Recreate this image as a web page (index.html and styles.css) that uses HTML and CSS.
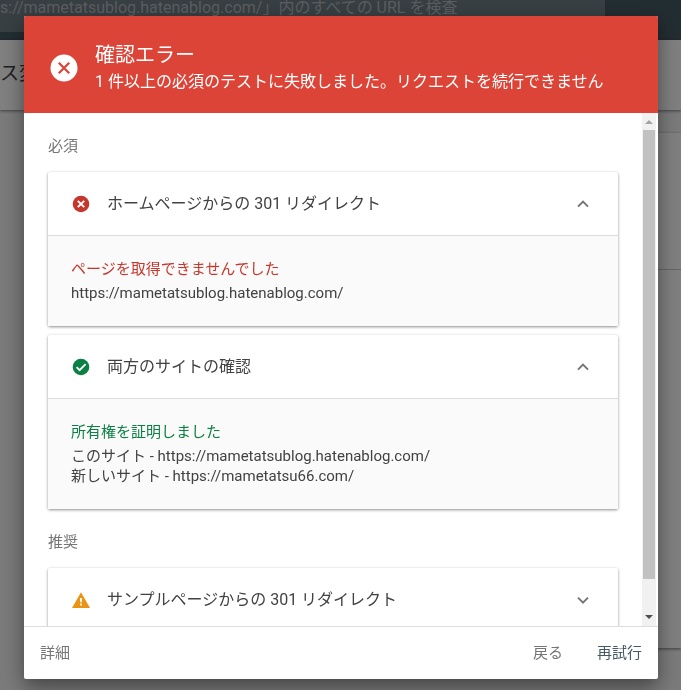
FILE: index.html
```html
<!DOCTYPE html>
<html lang="ja">
<head>
    <meta charset="UTF-8">
    <meta name="viewport" content="width=device-width, initial-scale=1.0">
    <title>確認エラー</title>
    <link rel="stylesheet" href="styles.css">
</head>
<body>
    <div class="page">
        <header class="topbar">
            <div class="search">s://mametatsublog.hatenablog.com/」内のすべての URL を検査</div>
        </header>
        <div class="page-title">ス変更</div>
        <main class="page-card">
            <div class="page-card-head"></div>
        </main>
    </div>

    <div class="overlay">
        <div class="dialog" role="dialog" aria-modal="true" aria-labelledby="dialog-title">
            <header class="dialog-header">
                <svg class="header-icon" viewBox="0 0 28 28" aria-hidden="true">
                    <circle cx="14" cy="14" r="13.5" fill="#fff"/>
                    <path d="M8.8 8.8l10.4 10.4M19.2 8.8L8.8 19.2" stroke="#db4437" stroke-width="2.2"/>
                </svg>
                <div>
                    <h1 id="dialog-title">確認エラー</h1>
                    <p>1 件以上の必須のテストに失敗しました。リクエストを続行できません</p>
                </div>
            </header>

            <div class="dialog-body">
                <div class="content">
                    <h2>必須</h2>
                    <section class="card">
                        <button class="card-head" type="button" aria-expanded="true">
                            <svg class="status" viewBox="0 0 18 18" aria-hidden="true">
                                <circle cx="9" cy="9" r="8.3" fill="#c5372c"/>
                                <path d="M5.8 5.8l6.4 6.4M12.2 5.8l-6.4 6.4" stroke="#fff" stroke-width="1.9"/>
                            </svg>
                            <span class="card-title">ホームページからの 301 リダイレクト</span>
                            <svg class="chevron" viewBox="0 0 12 12" aria-hidden="true"><path d="M1 8.6l5-5 5 5"/></svg>
                        </button>
                        <div class="card-detail">
                            <h3 class="error">ページを取得できませんでした</h3>
                            <p>https://mametatsublog.hatenablog.com/</p>
                        </div>
                    </section>
                    <section class="card">
                        <button class="card-head" type="button" aria-expanded="true">
                            <svg class="status" viewBox="0 0 18 18" aria-hidden="true">
                                <circle cx="9" cy="9" r="8.3" fill="#0b8043"/>
                                <path d="M4.6 9.2l3 3 6-6" fill="none" stroke="#fff" stroke-width="1.8"/>
                            </svg>
                            <span class="card-title">両方のサイトの確認</span>
                            <svg class="chevron" viewBox="0 0 12 12" aria-hidden="true"><path d="M1 8.6l5-5 5 5"/></svg>
                        </button>
                        <div class="card-detail">
                            <h3 class="success">所有権を証明しました</h3>
                            <p>このサイト - https://mametatsublog.hatenablog.com/</p>
                            <p>新しいサイト - https://mametatsu66.com/</p>
                        </div>
                    </section>

                    <h2>推奨</h2>
                    <section class="card">
                        <button class="card-head" type="button" aria-expanded="false">
                            <svg class="status" viewBox="0 0 18 18" aria-hidden="true">
                                <path d="M9 1.2L18 17H0z" fill="#ea9413"/>
                                <path d="M9 7v4.2M9 12.6v2" stroke="#fff" stroke-width="1.8"/>
                            </svg>
                            <span class="card-title">サンプルページからの 301 リダイレクト</span>
                            <svg class="chevron" viewBox="0 0 12 12" aria-hidden="true"><path d="M1 3.6l5 5 5-5"/></svg>
                        </button>
                    </section>
                </div>
                <div class="scrollbar" aria-hidden="true">
                    <span class="arrow arrow-up"></span>
                    <span class="thumb"></span>
                    <span class="arrow arrow-down"></span>
                </div>
            </div>

            <footer class="dialog-footer">
                <button class="details" type="button">詳細</button>
                <button type="button">戻る</button>
                <button class="primary" type="button">再試行</button>
            </footer>
        </div>
    </div>
</body>
</html>
```
FILE: styles.css
```css
* {
    box-sizing: border-box;
}
body {
    margin: 0;
    font-family: Roboto, "Noto Sans CJK JP", sans-serif;
    font-size: 15px;
    line-height: 20px;
    color: #424242;
    overflow: hidden;
}
h1, h2, h3, p {
    margin: 0;
    font-weight: 400;
}
button {
    border: 0;
    padding: 0;
    background: none;
    font: inherit;
    color: inherit;
    cursor: pointer;
}

/* page behind the dialog */
.page {
    height: 100vh;
    background: #f5f5f5;
    display: flex;
    flex-direction: column;
}
.topbar {
    height: 40px;
    padding-right: 76px;
    background: #455a64;
    flex: none;
}
.search {
    height: 32px;
    background: #6f7e86;
    color: #b4bbbf;
    font-size: 16px;
    line-height: 16px;
    white-space: nowrap;
}
.page-title {
    height: 70px;
    flex: none;
    background: #fff;
    color: #424242;
    font-size: 19px;
    line-height: 68px;
    box-shadow: 0 1px 3px rgba(0,0,0,0.5);
}
.page-card {
    flex: 1;
    margin: 23px 0 42px 40px;
    background: #fff;
    box-shadow: 0 1px 3px rgba(0,0,0,0.5);
}
.page-card-head {
    height: 137px;
    border-bottom: 1px solid #ccc;
}

/* dialog */
.overlay {
    position: fixed;
    inset: 0;
    padding: 16px 23px 11px 24px;
    background: rgba(0,0,0,0.5);
    display: flex;
}
.dialog {
    flex: 1;
    min-width: 0;
    display: flex;
    flex-direction: column;
    background: #fff;
    border-radius: 2px;
    overflow: hidden;
    box-shadow: 0 8px 20px rgba(0,0,0,0.45);
}
.dialog-header {
    flex: none;
    display: flex;
    align-items: center;
    gap: 17px;
    padding: 25px 26px 19px;
    background: #db4437;
    color: #fff;
    font-size: 16px;
}
.dialog-header h1 {
    font-size: 20px;
    line-height: 28px;
}
.dialog-header p {
    line-height: 25px;
}
.header-icon {
    width: 28px;
    height: 28px;
    flex: none;
}
.dialog-body {
    flex: 1;
    min-height: 0;
    display: flex;
}
.content {
    flex: 1;
    min-width: 0;
    padding: 0 24px;
    overflow: hidden;
}
.content h2 {
    padding: 23px 0 16px;
    color: #757575;
    font-size: 15px;
}
.card {
    border-radius: 2px;
    box-shadow: 0 1px 3px rgba(0,0,0,0.45);
}
.card + .card {
    margin-top: 9px;
}
.card-head {
    display: flex;
    align-items: center;
    width: 100%;
    height: 63px;
    padding: 0 29px 0 24px;
    font-size: 16px;
    text-align: left;
}
.status {
    width: 18px;
    height: 18px;
    margin-right: 17px;
}
.card-title {
    flex: 1;
}
.chevron {
    width: 12px;
    height: 12px;
    fill: none;
    stroke: #757575;
    stroke-width: 2;
}
.card-detail {
    padding: 23px;
    border-top: 1px solid #dcdcdc;
    background: #fafafa;
}
.card-detail h3 {
    margin-bottom: 4px;
    font-size: 15px;
}
.error {
    color: #c5372c;
}
.success {
    color: #0b8043;
}

/* scrollbar */
.scrollbar {
    width: 16px;
    padding-right: 2px;
    display: flex;
    flex-direction: column;
    align-items: center;
    background: linear-gradient(to right, #f1f1f1 14px, #fff 14px);
}
.thumb {
    width: 12px;
    flex: 1;
    background: #c1c1c1;
}
.arrow {
    height: 17px;
    display: flex;
    align-items: center;
}
.arrow-down {
    height: 47px;
    padding-top: 28px;
}
.arrow::before {
    content: "";
    border: 4px solid transparent;
    border-top-width: 0;
    border-bottom-color: #a3a3a3;
}
.arrow-down::before {
    border-top: 4px solid #505050;
    border-bottom-width: 0;
}

.dialog-footer {
    flex: none;
    display: flex;
    gap: 34px;
    padding: 16px;
    border-top: 1px solid #ddd;
    color: #757575;
}
.details {
    margin-right: auto;
}
.primary {
    color: #455a64;
}
```
